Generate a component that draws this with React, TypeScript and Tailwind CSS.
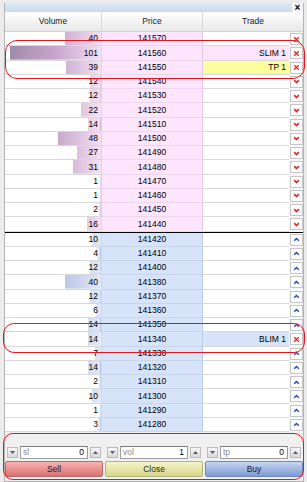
type Btn = "x" | "down" | "up";

type Row = {
  price: number;
  vol: number;
  trade?: string;
  tradeBg?: string;
  btn: Btn;
};

const asks: Row[] = [
  { price: 141570, vol: 40, btn: "x" },
  { price: 141560, vol: 101, trade: "SLIM 1", tradeBg: "bg-[#fde4fd]", btn: "x" },
  { price: 141550, vol: 39, trade: "TP 1", tradeBg: "bg-[#fdfd9e]", btn: "x" },
  { price: 141540, vol: 12, btn: "down" },
  { price: 141530, vol: 12, btn: "down" },
  { price: 141520, vol: 22, btn: "down" },
  { price: 141510, vol: 14, btn: "down" },
  { price: 141500, vol: 48, btn: "down" },
  { price: 141490, vol: 27, btn: "down" },
  { price: 141480, vol: 31, btn: "down" },
  { price: 141470, vol: 1, btn: "down" },
  { price: 141460, vol: 1, btn: "down" },
  { price: 141450, vol: 2, btn: "down" },
  { price: 141440, vol: 16, btn: "down" },
];

const bids: Row[] = [
  { price: 141420, vol: 10, btn: "up" },
  { price: 141410, vol: 4, btn: "up" },
  { price: 141400, vol: 12, btn: "up" },
  { price: 141380, vol: 40, btn: "up" },
  { price: 141370, vol: 12, btn: "up" },
  { price: 141360, vol: 6, btn: "up" },
  { price: 141350, vol: 14, btn: "up" },
  { price: 141340, vol: 14, trade: "BLIM 1", tradeBg: "bg-[#d6e3f8]", btn: "x" },
  { price: 141330, vol: 7, btn: "up" },
  { price: 141320, vol: 14, btn: "up" },
  { price: 141310, vol: 2, btn: "up" },
  { price: 141300, vol: 10, btn: "up" },
  { price: 141290, vol: 1, btn: "up" },
  { price: 141280, vol: 3, btn: "up" },
];

function RowButton({ kind }: { kind: Btn }) {
  return (
    <div className="flex h-[12px] w-[13px] items-center justify-center border border-[#c6c6c6] bg-white">
      {kind === "x" && (
        <svg width="7" height="7" viewBox="0 0 7 7">
          <path d="M1.2 1.2 L5.8 5.8 M5.8 1.2 L1.2 5.8" stroke="#e02828" strokeWidth="1.3" fill="none" />
        </svg>
      )}
      {kind === "down" && (
        <svg width="7" height="5" viewBox="0 0 7 5">
          <path d="M1.2 1.2 L3.5 3.5 L5.8 1.2" stroke="#e02828" strokeWidth="1.7" fill="none" />
        </svg>
      )}
      {kind === "up" && (
        <svg width="7" height="5" viewBox="0 0 7 5">
          <path d="M1.2 3.8 L3.5 1.5 L5.8 3.8" stroke="#2c48c0" strokeWidth="1.5" fill="none" />
        </svg>
      )}
    </div>
  );
}

function BookRow({ row, side }: { row: Row; side: "ask" | "bid" }) {
  const barClass =
    side === "ask"
      ? "bg-[linear-gradient(to_right,#9c88a6,#c8a8cc_55%,#f4e0f4)]"
      : "bg-[linear-gradient(to_right,#8296c8,#b4c2e2_55%,#dfe8f8)]";
  const priceClass =
    side === "ask"
      ? "bg-[#fde5fd] border-b-[#ecd6ec] border-r-[#e4c8e4]"
      : "bg-[#d6e3f8] border-b-[#c9d6ec] border-r-[#bccbe6]";
  return (
    <div className="flex h-[14.25px]">
      <div className="relative flex w-[97px] items-center justify-end border-r border-b border-[#d8d8d8] bg-white pr-[3px]">
        <div
          className={`absolute top-0 right-0 bottom-0 bg-[length:96px_100%] bg-right ${barClass}`}
          style={{ width: Math.min(row.vol * 0.9, 96) }}
        />
        <span className="relative">{row.vol}</span>
      </div>
      <div className={`flex w-[101px] items-center justify-center border-r border-b ${priceClass}`}>
        {row.price}
      </div>
      <div
        className={`flex w-[86px] items-center justify-end border-b border-[#d8d8d8] pr-[3px] ${row.tradeBg ?? "bg-white"}`}
      >
        {row.trade}
      </div>
      <div className="flex w-[14px] items-start justify-center bg-[#f7f7f7] pt-[1px]">
        <RowButton kind={row.btn} />
      </div>
    </div>
  );
}

function Spin({ label, value }: { label: string; value: string }) {
  return (
    <div className="flex items-center gap-[2px]">
      <div className="flex h-[11px] w-[11px] items-center justify-center border border-[#bcbcbc] bg-[linear-gradient(#f6f6f6,#d9d9d9)]">
        <svg width="5" height="3" viewBox="0 0 5 3">
          <path d="M0 0 H5 L2.5 3 Z" fill="#4e5f82" />
        </svg>
      </div>
      <div className="flex h-[13px] w-[68px] items-center justify-between border border-[#9c9c9c] border-t-[#7d7d7d] bg-white pr-[3px] pl-[2px]">
        <span className="text-[#8c8c8c]">{label}</span>
        <span>{value}</span>
      </div>
      <div className="flex h-[11px] w-[11px] items-center justify-center border border-[#bcbcbc] bg-[linear-gradient(#f6f6f6,#d9d9d9)]">
        <svg width="5" height="3" viewBox="0 0 5 3">
          <path d="M0 3 H5 L2.5 0 Z" fill="#4e5f82" />
        </svg>
      </div>
    </div>
  );
}

export default function App() {
  return (
    <div className="relative h-[482px] w-[307px] overflow-hidden bg-[#ececec] pt-[3px] pr-[3px] pl-[4px] font-['Liberation_Sans',Arial,sans-serif] text-[8.5px] leading-none text-black">
      <div className="flex h-[479px] flex-col border-x border-b border-[#b5b5b5] bg-[#f0f0f0]">
        {/* title bar */}
        <div className="flex h-[9px]">
          <div className="flex-1 bg-[linear-gradient(#dfe9f5,#c9d9ec)]" />
          <div className="flex w-[11px] items-center justify-center bg-[#f5f5f5] text-[10px] font-bold">×</div>
        </div>

        {/* column headers */}
        <div className="flex h-[20px] border-b border-[#d2d2d2] bg-[linear-gradient(#ffffff,#e8e8e8)] text-[#1c1c1c]">
          <div className="flex w-[97px] items-center justify-center border-r border-[#dadada]">Volume</div>
          <div className="flex w-[101px] items-center justify-center border-r border-[#dadada]">Price</div>
          <div className="flex flex-1 items-center justify-center">Trade</div>
        </div>

        {/* order book */}
        <div className="flex flex-col">
          {asks.map((r) => (
            <BookRow key={r.price} row={r} side="ask" />
          ))}
          <div className="h-px bg-black" />
          {bids.map((r) => (
            <BookRow key={r.price} row={r} side="bid" />
          ))}
        </div>

        {/* order panel */}
        <div className="flex flex-col gap-[2px] pt-[14px] pl-[2px]">
          <div className="flex gap-[6px]">
            <Spin label="sl" value="0" />
            <Spin label="vol" value="1" />
            <Spin label="tp" value="0" />
          </div>
          <div className="-ml-[2px] flex gap-[2px]">
            <button className="flex h-[16px] w-[98px] items-center justify-center rounded-[2px] border border-[#b86a6a] bg-[linear-gradient(#f7b4b4,#dc7070)] text-[#2a2020]">
              Sell
            </button>
            <button className="flex h-[16px] w-[98px] items-center justify-center rounded-[2px] border border-[#b4b47a] bg-[linear-gradient(#f4f4c8,#d8d88c)] text-[#2a2a20]">
              Close
            </button>
            <button className="flex h-[16px] w-[98px] items-center justify-center rounded-[2px] border border-[#6f88bd] bg-[linear-gradient(#c6d5f3,#7f9bd4)] text-[#20202a]">
              Buy
            </button>
          </div>
        </div>
      </div>

      {/* red annotation outlines */}
      <div className="pointer-events-none absolute top-[40px] left-[5px] h-[39px] w-[300px] rounded-[12px] border-[1.5px] border-[#e4161b]" />
      <div className="pointer-events-none absolute top-[323px] left-[3px] h-[30px] w-[302px] rounded-[11px] border-[1.5px] border-[#e4161b]" />
      <div className="pointer-events-none absolute top-[433px] left-[3px] h-[47px] w-[301px] rounded-[10px] border-[1.5px] border-[#e4161b]" />
    </div>
  );
}
